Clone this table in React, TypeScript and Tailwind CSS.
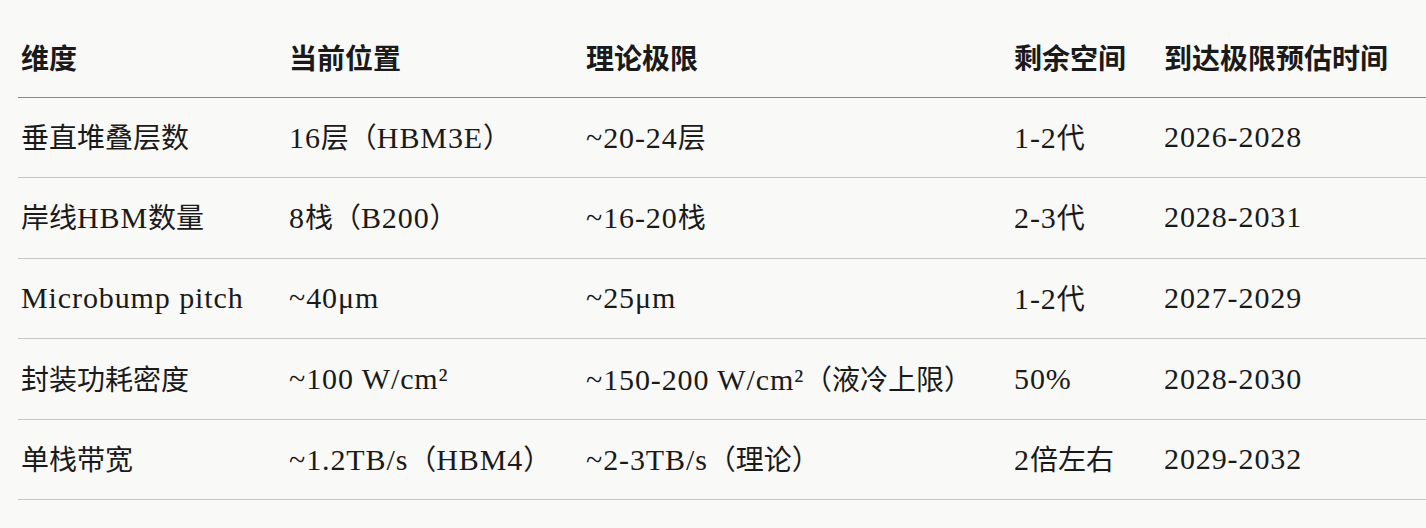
import React from "react";

const rows: string[][] = [
  ["垂直堆叠层数", "16层（HBM3E）", "~20-24层", "1-2代", "2026-2028"],
  ["岸线HBM数量", "8栈（B200）", "~16-20栈", "2-3代", "2028-2031"],
  ["Microbump pitch", "~40μm", "~25μm", "1-2代", "2027-2029"],
  ["封装功耗密度", "~100 W/cm²", "~150-200 W/cm²（液冷上限）", "50%", "2028-2030"],
  ["单栈带宽", "~1.2TB/s（HBM4）", "~2-3TB/s（理论）", "2倍左右", "2029-2032"],
];

const headers = ["维度", "当前位置", "理论极限", "剩余空间", "到达极限预估时间"];

function Mixed({ text }: { text: string }) {
  const parts = text.split(/([\u3000-\u9fff\uff00-\uffef]+)/).filter((p) => p.length > 0);
  return (
    <>
      {parts.map((p, i) =>
        /[\u3000-\u9fff\uff00-\uffef]/.test(p) ? (
          <span key={i} style={{ fontFamily: '"Noto Sans CJK SC", sans-serif' }}>
            {p}
          </span>
        ) : (
          <span key={i} className="text-[30px] tracking-[0.9px]">
            {p}
          </span>
        )
      )}
    </>
  );
}

export default function App() {
  return (
    <div
      className="w-[1426px] h-[528px] overflow-hidden bg-[#f9f9f7] text-[#1a1a1a] pt-[17px] pl-[18px]"
      style={{ fontFamily: '"Liberation Serif", "Noto Sans CJK SC", serif' }}
    >
      <table className="w-[1408px] border-collapse table-fixed text-[28px] leading-[42px]">
        <colgroup>
          <col className="w-[268px]" />
          <col className="w-[297px]" />
          <col className="w-[428px]" />
          <col className="w-[150px]" />
          <col />
        </colgroup>
        <thead>
          <tr className="h-[80px] border-b border-[#8a8a88]">
            {headers.map((h) => (
              <th
                key={h}
                className="p-0 pl-[3px] text-left align-middle font-bold whitespace-nowrap"
                style={{ fontFamily: '"Noto Sans CJK SC", sans-serif' }}
              >
                {h}
              </th>
            ))}
          </tr>
        </thead>
        <tbody>
          {rows.map((r, i) => (
            <tr key={i} className="h-[80.6px] border-b border-[#c6c6c4]">
              {r.map((c, j) => (
                <td key={j} className="p-0 pl-[3px] align-middle whitespace-nowrap">
                  <Mixed text={c} />
                </td>
              ))}
            </tr>
          ))}
        </tbody>
      </table>
    </div>
  );
}
